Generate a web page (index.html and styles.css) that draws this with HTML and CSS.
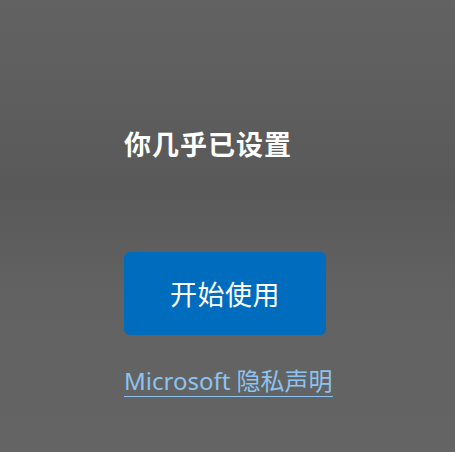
FILE: index.html
```html
<!DOCTYPE html>
<html lang="zh-CN">
<head>
    <meta charset="UTF-8">
    <meta name="viewport" content="width=device-width, initial-scale=1.0">
    <title>你几乎已设置</title>
    <link rel="stylesheet" href="styles.css">
</head>
<body>
    <div class="page">
        <h1 class="title">你几乎已设置</h1>

        <button class="start-btn">开始使用</button>

        <a class="privacy-link" href="#">Microsoft 隐私声明</a>
    </div>
</body>
</html>
```

FILE: styles.css
```css
* {
    margin: 0;
    padding: 0;
    box-sizing: border-box;
}

html, body {
    height: 100%;
}

body {
    font-family: "Noto Sans", "Noto Sans CJK SC", sans-serif;
    background: linear-gradient(180deg, #626262 0%, #5d5d5d 25%, #595959 42%, #626262 65%, #646464 100%);
    color: #fff;
    overflow: hidden;
}

.page {
    display: flex;
    flex-direction: column;
    align-items: flex-start;
    padding: 126px 0 0 124px;
}

.title {
    font-size: 27px;
    font-weight: bold;
    line-height: 38px;
    letter-spacing: 1px;
}

.start-btn {
    margin-top: 88px;
    width: 202px;
    height: 83px;
    background: #006cbe;
    color: #fff;
    border: none;
    border-radius: 6px;
    font-family: inherit;
    font-size: 27px;
    letter-spacing: 0.5px;
    cursor: pointer;
}

.privacy-link {
    margin-top: 30px;
    color: #8dc3f0;
    font-size: 24px;
    line-height: 31px;
    text-decoration: none;
    border-bottom: 1px solid #8dc3f0;
}
```
